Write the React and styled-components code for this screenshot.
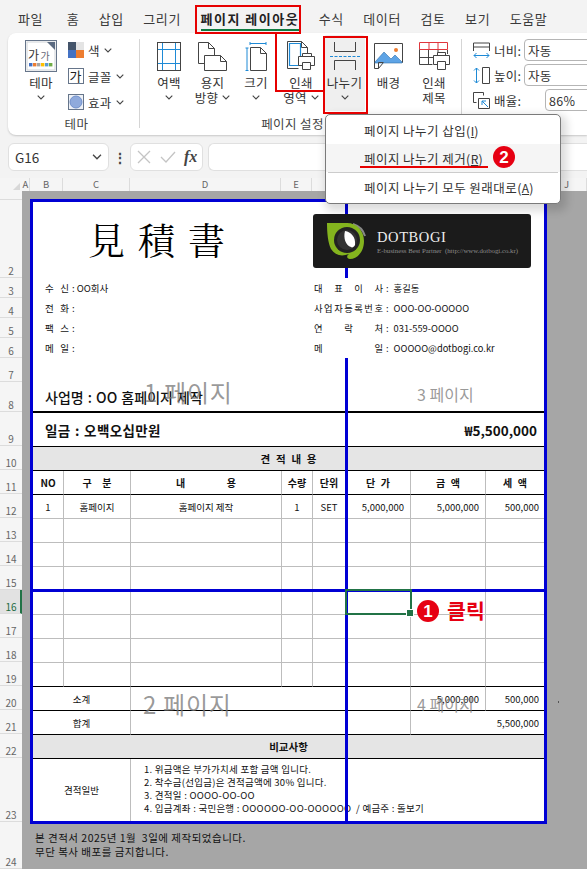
import React from "react";
import styled, { createGlobalStyle } from "styled-components";

const KR = `"Noto Sans CJK KR", "Noto Sans", sans-serif`;

const Global = createGlobalStyle`
  html, body { margin: 0; padding: 0; background: #f3f3f3; }
  body { font-family: ${KR}; color: #333; overflow: hidden; }
  * { box-sizing: border-box; }
`;

const Screen = styled.div`
  position: relative; width: 587px; height: 869px; overflow: hidden;
  display: flex; flex-direction: column; background: #f3f3f3;
`;

/* ---------- tabs ---------- */
const TabBar = styled.div`
  height: 33px; display: flex; align-items: center; gap: 19.5px; padding: 4px 0 0 18px;
  flex: none;
`;
const Tab = styled.div`
  position: relative; font-size: 13px; letter-spacing: ${p => (p.$active ? "1.5px" : "0.6px")}; white-space: nowrap;
  color: ${p => (p.$active ? "#222" : "#3a3a3a")};
  font-weight: ${p => (p.$active ? 700 : 400)};
  margin-right: ${p => p.$after || 0}px;
  ${p => p.$active && `
    &::after { content: ""; position: absolute; left: 0; right: 0; bottom: -3px; height: 2px; background: #107c41; }
  `}
`;

/* ---------- ribbon ---------- */
const Ribbon = styled.div`
  height: 102px; margin-left: 8px; flex: none; display: flex; background: #fff;
  border-radius: 8px 0 0 8px; box-shadow: 0 1px 2px rgba(0,0,0,.18);
`;
const Group = styled.div`
  width: ${p => p.$w}px; flex: none; display: flex; flex-direction: column; position: relative;
  padding-left: ${p => p.$pad || 0}px;
  ${p => p.$rule && `
    &::after { content: ""; position: absolute; right: 0; top: 6px; height: 89px; width: 1px; background: #d5d5d5; }
  `}
`;
const Tools = styled.div`
  height: 82px; flex: none; display: flex; padding-top: 5px;
`;
const GroupLabel = styled.div`
  flex: 1; display: flex; align-items: flex-start; justify-content: center;
  font-size: 12.5px; line-height: 17px; letter-spacing: .4px; color: #444; padding-right: ${p => p.$shift || 0}px;
  white-space: nowrap;
`;
const Big = styled.div`
  width: ${p => p.$w}px; flex: none; display: flex; flex-direction: column; align-items: center;
  font-size: 12.5px; line-height: 15px; letter-spacing: .3px; color: #333;
  ${p => p.$on && `background: #efefef; margin-top: -3px; padding-top: 3px; height: 76px; border-radius: 3px;`}
`;
const BigIcon = styled.div`
  height: 37px; display: flex; align-items: center; justify-content: center; padding-bottom: 1px;
`;
const Line = styled.div`
  height: 15px; display: flex; align-items: center; gap: 4px; white-space: nowrap;
`;
const SmallColumn = styled.div`
  display: flex; flex-direction: column; gap: 10px; padding-top: 4px; margin-left: 7px;
`;
const SmallRow = styled.div`
  display: flex; align-items: center; gap: 4px; height: 16px;
  font-size: 12.5px; letter-spacing: .3px; color: #333; white-space: nowrap;
`;
const ScaleColumn = styled.div`
  height: 82px; flex: none; display: flex; flex-direction: column; gap: 3px; margin-left: 11px; padding-top: 6px;
`;
const ScaleRow = styled.div`
  display: flex; align-items: center; height: 22px; font-size: 12.5px; letter-spacing: .3px; color: #333;
  width: 200px;
  & > svg { flex: none; }
`;
const ScaleName = styled.span`
  width: ${p => p.$w}px; flex: none; padding-left: 4px;
`;
const ScaleInput = styled.div`
  height: 22px; width: 80px; flex: none; border: 1px solid #b5b5b5; border-radius: 4px;
  padding-left: 3px; display: flex; align-items: center; background: #fff; color: #333;
`;
const Chevron = styled.svg`
  width: ${p => p.$large ? 10 : 8}px; height: ${p => p.$large ? 6 : 5}px; fill: none; stroke: #444; stroke-width: 1.1; flex: none;
`;
const Chev = ({ large }) => <Chevron $large={large} viewBox="0 0 8 5"><path d="M.7.7 4 4 7.3.7" /></Chevron>;

/* ---------- formula row ---------- */
const FormulaRow = styled.div`
  height: 43px; flex: none; display: flex; align-items: center; padding: 1px 0 0 8px;
`;
const NameBox = styled.div`
  width: 101px; height: 28px; flex: none; background: #fff; border: 1px solid #e0e0e0; border-radius: 6px;
  display: flex; align-items: center; justify-content: space-between; padding: 0 6px 0 6px;
  font-size: 13.5px; color: #333;
`;
const Dots = styled.div`
  width: 21px; flex: none; text-align: center; font-size: 14px; font-weight: 700; color: #444; line-height: 1;
`;
const FxBox = styled.div`
  width: 73px; height: 28px; flex: none; background: #fff; border: 1px solid #e0e0e0; border-radius: 6px;
  display: flex; align-items: center; gap: 9px; padding-left: 6px;
`;
const FxText = styled.span`
  font-family: "Liberation Serif", serif; font-style: italic; font-size: 16px; font-weight: 700; color: #444; margin-left: -1px;
`;
const FormulaInput = styled.div`
  flex: 1; height: 28px; margin-left: 5px; background: #fff; border: 1px solid #e0e0e0; border-right: none; border-radius: 6px 0 0 6px;
`;

/* ---------- column header ---------- */
const ColBar = styled.div`
  height: 13px; flex: none; display: flex; background: #f5f5f5;
`;
const ColCell = styled.div`
  width: ${p => p.$w}px; flex: none; border-right: 1px solid #dcdcdc;
  display: flex; align-items: center; justify-content: center; font-size: 9.5px; color: #666; line-height: 1;
`;
const Corner = styled.div`
  width: 22px; flex: none; position: relative; background: #f5f5f5;
  &::after { content: ""; position: absolute; right: 2px; bottom: 1px; width: 0; height: 0;
    border-left: 7px solid transparent; border-bottom: 7px solid #d8d8d8; }
`;

/* ---------- body ---------- */
const Body = styled.div`
  flex: 1; display: flex; min-height: 0;
`;
const RowBar = styled.div`
  width: 22px; flex: none; background: #f5f5f5; display: flex; flex-direction: column;
`;
const RowCell = styled.div`
  height: ${p => p.$h}px; flex: none; display: flex; align-items: flex-end; justify-content: center; padding-bottom: 1px;
  font-size: 10px; line-height: 11px; color: #666; border-bottom: 1px solid #dcdcdc;
  ${p => p.$on && `background: #e2e2e2; color: #1d6b42; border-right: 2px solid #217346; padding-left: 2px;`}
`;
const Canvas = styled.div`
  flex: 1; position: relative; background: #a6a6a6; padding: 8px 0 0 8px;
`;
const Frame = styled.div`
  width: 517px; height: 625px; border: 3px solid #0000d4; background: #fff; position: relative;
`;
const Sheet = styled.div`
  display: grid; color: #111;
  grid-template-columns: 31px 67px 151px 31px 33px 65px 75px 58px;
  grid-template-rows: 76px repeat(4, 20px) 24px 31px 34px repeat(13, 24px) 62px;
`;
const Cell = styled.div`
  grid-column: span ${p => p.$span || 1};
  display: flex; align-items: center; min-width: 0; white-space: pre;
  justify-content: ${p => p.$align || "center"};
  font-size: ${p => p.$size || 9.5}px;
  font-weight: ${p => (p.$bold ? 700 : 400)};
  padding: ${p => p.$pad || "0"};
  background: ${p => p.$bg || "transparent"};
  border-right: ${p => (p.$side ? "1px solid #bdbdbd" : "none")};
  border-bottom: ${p => (p.$under === "heavy" ? "2px solid #000" : p.$under === "black" ? "1px solid #000" : p.$under === "gray" ? "1px solid #bdbdbd" : "none")};
`;
const InfoCell = styled(Cell)`
  position: relative; z-index: 2; background: #fff;
`;
const ProjectCell = styled(Cell)`
  font-weight: 500; word-spacing: 1px;
`;
const AmountCell = styled(Cell)`
  letter-spacing: .35px; word-spacing: 1px;
`;
const Colon = styled.span`
  margin: 0 ${p => p.$gap || 3}px 0 3px;
`;
const Spread = styled.span`
  display: inline-flex; justify-content: space-between; width: ${p => p.$w}px; flex: none;
`;
const Spaced = ({ w, text }) => (
  <Spread $w={w}>{[...text].map((c, i) => <span key={i}>{c}</span>)}</Spread>
);
const Title = styled(Cell)`
  font-family: "Liberation Serif", "Noto Serif CJK KR", serif;
  font-size: 37px; line-height: 1; justify-content: flex-start; padding: 4px 0 0 55px; letter-spacing: 13px; color: #000;
`;
const LogoCell = styled(Cell)`
  align-items: flex-start; justify-content: flex-start; padding-top: 12px; position: relative; z-index: 2;
`;
const Logo = styled.div`
  width: 218px; height: 54px; background: #1b1b1b; border-radius: 3px; display: flex; align-items: center; padding-left: 14px; position: relative;
`;
const LogoText = styled.div`
  margin-left: 11px; display: flex; flex-direction: column; color: #eee; margin-top: 3px;
`;
const LogoName = styled.div`
  font-family: "Liberation Serif", serif; font-size: 14.5px; line-height: 13px; letter-spacing: .6px; font-variant: small-caps;
`;
const LogoSub = styled.div`
  font-family: "Liberation Serif", serif; font-size: 6.8px; line-height: 9px; color: #8c8c8c; margin-top: 2px; white-space: pre;
`;
const Notes = styled.div`
  font-size: 10.5px; line-height: 14px; color: #111; padding: 7px 0 0 5px; letter-spacing: .5px; white-space: pre;
`;
const TermList = styled.div`
  line-height: 13px; font-size: 9.5px; letter-spacing: .25px; padding-bottom: 2px;
`;

/* ---------- overlays ---------- */
const BlueV = styled.div`
  position: absolute; left: 312px; top: -3px; bottom: -3px; width: 3px; background: #0000d4; z-index: 1;
`;
const BlueH = styled.div`
  position: absolute; left: 0; right: 0; top: 387px; height: 3px; background: #0000d4; z-index: 1;
`;
const Selection = styled.div`
  position: absolute; left: 312px; top: 387px; width: 67px; height: 26px; border: 2px solid #217346; z-index: 2;
  &::after { content: ""; position: absolute; right: -4px; bottom: -4px; width: 6px; height: 6px; background: #217346; border: 1px solid #fff; }
`;
const Watermark = styled.div`
  position: absolute; left: ${p => p.$x}px; top: ${p => p.$y}px; font-size: ${p => p.$size}px; line-height: 1;
  letter-spacing: ${p => p.$track || 0}px;
  color: rgba(120,120,120,.75); z-index: 3; white-space: nowrap;
`;
const Badge = styled.div`
  position: absolute; left: ${p => p.$x}px; top: ${p => p.$y}px; width: 22px; height: 22px; border-radius: 50%;
  background: #e60012; color: #fff; font-size: 17px; font-weight: 700; display: flex; align-items: center; justify-content: center;
  z-index: 6; font-family: "Liberation Sans", sans-serif; line-height: 1;
`;
const ClickLabel = styled.div`
  position: absolute; left: 447px; top: 597px; font-size: 20.5px; font-weight: 700; color: #e60012; line-height: 26px; z-index: 6; letter-spacing: .2px;
`;
const RedBox = styled.div`
  position: absolute; left: ${p => p.$x}px; top: ${p => p.$y}px; width: ${p => p.$w}px; height: ${p => p.$h}px;
  border: solid #e60000; border-width: ${p => p.$edges || "2px"}; z-index: 5; pointer-events: none;
`;
const Speck = styled.div`
  position: absolute; left: 558px; top: 701px; width: 1px; height: 2px; background: #555;
`;
const Menu = styled.div`
  position: absolute; left: 325px; top: 114px; width: 236px; height: 90px; background: #fff; z-index: 4;
  border: 1px solid #7a7a7a; border-radius: 5px; box-shadow: 3px 4px 8px 3px rgba(0,0,0,.14);
  display: flex; flex-direction: column; padding-top: 1px;
`;
const MenuItem = styled.div`
  height: ${p => p.$h}px; display: flex; align-items: center; padding-left: 38px; font-size: 12.5px; letter-spacing: .45px; color: #333;
  background: ${p => (p.$hover ? "#f5f5f5" : "transparent")}; white-space: pre; flex: none; position: relative;
  ${p => p.$mark && `&::after { content: ""; position: absolute; left: 34px; top: 22px; width: 128px; height: 2px; background: #e60000; }`}
`;
const MenuRule = styled.div`
  height: 1px; margin: 0 2px; background: #ccc; flex: none;
`;
const Key = styled.span`
  text-decoration: underline; text-underline-offset: 1px; font-size: 12px; letter-spacing: 0;
`;

/* ---------- icons ---------- */
const D = "#444"; const B = "#1e8ad6";
const ThemeIcon = () => (
  <svg width="32" height="33" viewBox="0 0 32 33">
    <rect x=".5" y=".5" width="31" height="31" fill="#fff" stroke="#66758a" />
    <rect x="2" y="2" width="28" height="28" fill="#fff" stroke="#cfd3d8" />
    <path d="M22 2h8v8z" fill="#5a6a80" />
    <text x="3" y="20" fontSize="12" fill="#333" fontFamily={KR}>가</text>
    <text x="15.5" y="20" fontSize="10" fill="#667" fontFamily={KR}>가</text>
    {["#4472c4", "#ed7d31", "#a5a5a5", "#ffc000", "#5b9bd5", "#70ad47"].map((c, i) => (
      <rect key={c} x={4 + i * 4} y="23" width="3.4" height="3.4" fill={c} />
    ))}
  </svg>
);
const ColorIcon = () => (
  <svg width="16" height="16" viewBox="0 0 16 16">
    <rect width="8" height="8" fill="#44546a" /><rect x="8" width="8" height="8" fill="#e4e4e4" />
    <rect y="8" width="8" height="8" fill="#4472c4" /><rect x="8" y="8" width="8" height="8" fill="#ed7d31" />
  </svg>
);
const FontIcon = () => (
  <svg width="16" height="16" viewBox="0 0 16 16">
    <rect x=".5" y=".5" width="15" height="15" fill="#fff" stroke="#66758a" />
    <text x="1.500" y="13" fontSize="13" fill="#222" fontFamily={KR}>가</text>
  </svg>
);
const EffectIcon = () => (
  <svg width="16" height="16" viewBox="0 0 16 16">
    <rect x=".5" y=".5" width="15" height="15" fill="#eef1f6" stroke="#66758a" />
    <circle cx="8" cy="8" r="6" fill="#8faadc" stroke="#6f8fca" />
  </svg>
);
const MarginIcon = () => (
  <svg width="24" height="29" viewBox="0 0 24 29" fill="none">
    <path d="M5.500 1v27M18.500 1v27M1 7.500h22M1 21.500h22" stroke={B} />
    <rect x=".5" y=".5" width="23" height="28" stroke={D} />
  </svg>
);
const OrientIcon = () => (
  <svg width="29" height="29" viewBox="0 0 29 29" fill="none" stroke={D}>
    <path d="M.5 .5h10l6 6v13M.5 .5v21h6" />
    <path d="M10.500 .5v6h6" />
    <path d="M6.500 13.500h16l6 6v9h-22z" fill="#fff" />
    <path d="M22.500 13.500v6h6" />
  </svg>
);
const SizeIcon = () => (
  <svg width="22" height="29" viewBox="0 0 22 29" fill="none">
    <path d="M5 1.500h16M5 0v3M21 0v3M.5 6h3M2 6v23M.5 28.500h3" stroke={B} />
    <path d="M5.500 5.500h10l6 6v17h-16z" stroke={D} /><path d="M15.500 5.500v6h6" stroke={D} />
  </svg>
);
const PrintAreaIcon = () => (
  <svg width="28" height="30" viewBox="0 0 28 30" fill="none">
    <path d="M.5 .5h14l6 6v8M.5 .5v27h11" stroke={D} /><path d="M14.500 .5v6h6" stroke={D} />
    <path d="M2.500 2.500h11v22h-11z" stroke={B} strokeWidth="1.2" />
    <path d="M15.500 15.500v-3h9v3M11.500 15.500h16v9h-16z" stroke={D} fill="#fff" />
    <path d="M15.500 21.500h8v7h-8z" stroke={D} fill="#fff" />
  </svg>
);
const BreakIcon = () => (
  <svg width="30" height="28" viewBox="0 0 30 28" fill="none">
    <path d="M4.500 0v9.500h21V0" stroke={D} />
    <path d="M0 14.500h30" stroke={B} strokeDasharray="3 1.500" />
    <path d="M4.500 28V18.500h21V28" stroke={D} />
  </svg>
);
const BackgroundIcon = () => (
  <svg width="29" height="27" viewBox="0 0 29 27" fill="none">
    <path d="M.5 .5h28v19h-19l-5 6h-4z" fill="#fff" stroke={D} />
    <path d="M1 19l9-10 7 7 4-4 7 7v1H1z" fill="#5ea4e6" stroke="#2f6ea8" strokeWidth=".6" />
    <circle cx="22" cy="7" r="2" fill="#ed7d31" />
    <path d="M4.500 25.500v-6h5" stroke={D} />
  </svg>
);
const TitleIcon = () => (
  <svg width="31" height="28" viewBox="0 0 31 28" fill="none">
    <path d="M.5 .5h28v7h-28zM10 .5v7M19 .5v7" stroke="#e0363c" />
    <path d="M.5 7.500v15h13M.5 15.500h14M9.500 8v14M19 8v5M28.500 8v4" stroke={D} />
    <path d="M18.500 13.500v-3h8v3M14.500 13.500h16v9h-16z" stroke={D} fill="#fff" />
    <path d="M18.500 19.500h8v8h-8z" stroke={D} fill="#fff" />
  </svg>
);
const WidthIcon = () => (
  <svg width="17" height="17" viewBox="0 0 17 17" fill="none">
    <path d="M.5 9v-8h16v8M.5 5h16" stroke={D} />
    <path d="M1 13.500h15M3.500 11l-2.500 2.500 2.500 2.500M13.500 11l2.500 2.500-2.500 2.500" stroke={B} />
  </svg>
);
const HeightIcon = () => (
  <svg width="17" height="17" viewBox="0 0 17 17" fill="none">
    <path d="M9.500 .5h7v16h-7z" stroke={D} />
    <path d="M3.500 1v15M1 3.500L3.500 1 6 3.500M1 13.500L3.500 16 6 13.500" stroke={B} />
  </svg>
);
const ScaleIcon = () => (
  <svg width="17" height="17" viewBox="0 0 17 17" fill="none">
    <path d="M.5 .5h10v3M.5 .5v10h3" stroke={D} />
    <path d="M5.500 6.500h11v10h-11z" stroke={D} />
    <path d="M15 15l-6-6M9 13V9h4" stroke={B} />
  </svg>
);
const XIcon = () => (
  <svg width="14" height="14" viewBox="0 0 14 14" fill="none" stroke="#c4c4c4" strokeWidth="1.3">
    <path d="M1 1l12 12M13 1L1 13" />
  </svg>
);
const CheckIcon = () => (
  <svg width="16" height="12" viewBox="0 0 16 12" fill="none" stroke="#c4c4c4" strokeWidth="1.3">
    <path d="M1 6l5 5L15 1" />
  </svg>
);
const LeafMark = () => (
  <svg width="39" height="37" viewBox="0 0 39 37" style={{ flex: "none" }}>
    <path d="M26 1a18 18 0 0 1 12 12" fill="none" stroke="#888" strokeWidth="2" />
    <path d="M0 0h20c10 0 17 8 17 18 0 11-7 18-14 18-3 0-4-3-1-5-8 3-14 1-18-5C1 20 0 10 0 0z" fill="#84b41e" />
    <circle cx="20" cy="17" r="13" fill="#222" />
    <circle cx="20" cy="17" r="10" fill="#333" />
    <path d="M18 8c6 1 11 6 10 14-1 2-3 3-4 2-5-1-8-9-6-16z" fill="#fff" />
  </svg>
);

/* ---------- data ---------- */
const tabs = ["파일", "홈", "삽입", "그리기", "페이지 레이아웃", "수식", "데이터", "검토", "보기", "도움말"];
const cols = [["A", 8], ["B", 33], ["C", 67], ["D", 151], ["E", 31], ["F", 34], ["G", 64], ["H", 75], ["I", 62], ["J", 40]];
const rowHeights = [9, 78, 20, 20, 20, 20, 24, 30, 34, 24, 24, 24, 24, 24, 24, 24, 24, 24, 24, 24, 24, 24, 64, 47];
const leftInfo = [["수신", "OO회사"], ["전화", ""], ["팩스", ""], ["메일", ""]];
const rightInfo = [
  ["대표이사", "홍길동"], ["사업자등록번호", "OOO-OO-OOOOO"],
  ["연락처", "031-559-OOOO"], ["메일", "OOOOO@dotbogi.co.kr"],
];
const heads = [
  ["NO"], [null, "구분", 29], [null, "내용", 60], ["수량"], ["단위"], [null, "단가", 24], [null, "금액", 24], [null, "세액", 24],
];
const item = [
  ["1"], ["홈페이지"], ["홈페이지 제작"], ["1"], ["SET"],
  ["5,000,000", "flex-end", "0 6px 0 0"], ["5,000,000", "flex-end", "0 6px 0 0"], ["500,000", "flex-end", "0 5px 0 0"],
];

export default function App() {
  return (
    <Screen>
      <Global />
      <TabBar>
        {tabs.map((t, i) => <Tab key={t} $active={i === 4} $after={i === 0 ? 4 : 0}>{t}</Tab>)}
      </TabBar>

      <Ribbon>
        <Group $w={132} $pad={13} $rule>
          <Tools>
            <Big $w={40}>
              <BigIcon><ThemeIcon /></BigIcon>
              <Line>테마</Line>
              <Line><Chev /></Line>
            </Big>
            <SmallColumn>
              <SmallRow><ColorIcon />색 <Chev /></SmallRow>
              <SmallRow><FontIcon />글꼴 <Chev /></SmallRow>
              <SmallRow><EffectIcon />효과 <Chev /></SmallRow>
            </SmallColumn>
          </Tools>
          <GroupLabel $shift={8}>테마</GroupLabel>
        </Group>

        <Group $w={322} $pad={7} $rule>
          <Tools>
            <Big $w={44}><BigIcon><MarginIcon /></BigIcon><Line>여백</Line><Line><Chev /></Line></Big>
            <Big $w={43}><BigIcon><OrientIcon /></BigIcon><Line>용지</Line><Line>방향 <Chev /></Line></Big>
            <Big $w={44}><BigIcon><SizeIcon /></BigIcon><Line>크기</Line><Line><Chev /></Line></Big>
            <Big $w={46}><BigIcon><PrintAreaIcon /></BigIcon><Line>인쇄</Line><Line>영역 <Chev /></Line></Big>
            <Big $w={41} $on><BigIcon><BreakIcon /></BigIcon><Line>나누기</Line><Line><Chev /></Line></Big>
            <Big $w={47}><BigIcon><BackgroundIcon /></BigIcon><Line>배경</Line></Big>
            <Big $w={44}><BigIcon><TitleIcon /></BigIcon><Line>인쇄</Line><Line>제목</Line></Big>
          </Tools>
          <GroupLabel $shift={24}>페이지 설정</GroupLabel>
        </Group>

        <Group $w={125}>
          <ScaleColumn>
            <ScaleRow><WidthIcon /><ScaleName $w={34}>너비:</ScaleName><ScaleInput>자동</ScaleInput></ScaleRow>
            <ScaleRow><HeightIcon /><ScaleName $w={34}>높이:</ScaleName><ScaleInput>자동</ScaleInput></ScaleRow>
            <ScaleRow><ScaleIcon /><ScaleName $w={55}>배율:</ScaleName><ScaleInput>86%</ScaleInput></ScaleRow>
          </ScaleColumn>
          <GroupLabel $shift={18}>크기 조정에 맞춤</GroupLabel>
        </Group>
      </Ribbon>

      <FormulaRow>
        <NameBox>G16 <Chev large /></NameBox>
        <Dots>⋮</Dots>
        <FxBox><XIcon /><CheckIcon /><FxText>fx</FxText></FxBox>
        <FormulaInput />
      </FormulaRow>

      <ColBar>
        <Corner />
        {cols.map(([n, w]) => <ColCell key={n} $w={w}>{n}</ColCell>)}
      </ColBar>

      <Body>
        <RowBar>
          {rowHeights.map((h, i) => (
            <RowCell key={i} $h={h} $on={i === 15}>{i === 0 ? "" : i + 1}</RowCell>
          ))}
        </RowBar>
        <Canvas>
          <Frame>
            <Sheet>
              <Title $span={4}>見積書</Title>
              <LogoCell $span={4}>
                <Logo>
                  <LeafMark />
                  <LogoText>
                    <LogoName>DOTBOGI</LogoName>
                    <LogoSub>E-business Best Partner  (http://www.dotbogi.co.kr)</LogoSub>
                  </LogoText>
                </Logo>
              </LogoCell>

              {leftInfo.map(([k, v], i) => (
                <React.Fragment key={k}>
                  <Cell $span={4} $align="flex-start" $pad="0 0 0 12px" $size={9.5}>
                    <Spaced w={24} text={k} /><Colon $gap={2}>:</Colon>{v}
                  </Cell>
                  <InfoCell $span={4} $align="flex-start" $pad="0 0 0 1px" $size={9.3}>
                    <Spaced w={69} text={rightInfo[i][0]} /><Colon $gap={5}>:</Colon>{rightInfo[i][1]}
                  </InfoCell>
                </React.Fragment>
              ))}

              <Cell $span={8} />
              <ProjectCell $span={8} $align="flex-start" $pad="0 0 0 12px" $size={14} $under="heavy">사업명 : OO 홈페이지 제작</ProjectCell>
              <AmountCell $span={5} $align="flex-start" $pad="0 0 0 12px" $size={13.5} $bold $under="black">일금 : 오백오십만원</AmountCell>
              <Cell $span={3} $align="flex-end" $pad="0 7px 0 0" $size={13.5} $bold $under="black">₩5,500,000</Cell>
              <Cell $span={8} $bg="#e5e5e5" $under="black" $size={10.5} $bold><Spaced w={56} text="견적내용" /></Cell>

              {heads.map(([t, s, w], i) => (
                <Cell key={i} $side={i < 7} $under="black" $size={10} $bold>
                  {s ? <Spaced w={w} text={s} /> : t}
                </Cell>
              ))}
              {item.map(([t, a, p], i) => (
                <Cell key={i} $side={i < 7} $under="gray" $align={a} $pad={p} $size={9.5}>{t}</Cell>
              ))}
              {Array.from({ length: 7 }).flatMap((_, r) =>
                Array.from({ length: 8 }).map((_, c) => (
                  <Cell key={`${r}-${c}`} $side={c < 7} $under={r === 6 ? "black" : "gray"} />
                ))
              )}

              <Cell $span={2} $side $under="black">소계</Cell>
              <Cell $span={4} $side $under="black" />
              <Cell $side $under="black" $align="flex-end" $pad="0 6px 0 0">5,000,000</Cell>
              <Cell $under="black" $align="flex-end" $pad="0 5px 0 0">500,000</Cell>

              <Cell $span={2} $side $under="black">합계</Cell>
              <Cell $span={4} $side $under="black" />
              <Cell $span={2} $under="black" $align="flex-end" $pad="0 5px 0 0">5,500,000</Cell>

              <Cell $span={8} $bg="#e5e5e5" $under="black" $size={10.5} $bold>비교사항</Cell>

              <Cell $span={2} $side>견적일반</Cell>
              <Cell $span={6} $align="flex-start" $pad="0 0 0 13px">
                <TermList>
                  <div>1. 위금액은 부가가치세 포함 금액 입니다.</div>
                  <div>2. 착수금(선입금)은 견적금액에 30% 입니다.</div>
                  <div>3. 견적일 : OOOO-OO-OO</div>
                  <div>4. 입금계좌 : 국민은행 : OOOOOO-OO-OOOOOO  / 예금주 : 돌보기</div>
                </TermList>
              </Cell>
            </Sheet>
            <BlueV />
            <BlueH />
            <Selection />
            <Watermark $x={111} $y={178} $size={24} $track={.7}>1 페이지</Watermark>
            <Watermark $x={110} $y={490} $size={24} $track={.7}>2 페이지</Watermark>
            <Watermark $x={384} $y={184} $size={16}>3 페이지</Watermark>
            <Watermark $x={384} $y={494} $size={16}>4 페이지</Watermark>
          </Frame>
          <Notes>{"본 견적서 2025년 1월  3일에 제작되었습니다.\n무단 복사 배포를 금지합니다."}</Notes>
        </Canvas>
      </Body>

      <Menu>
        <MenuItem $h={28}>페이지 나누기 삽입(<Key>I</Key>)</MenuItem>
        <MenuItem $h={28} $hover $mark>페이지 나누기 제거(<Key>R</Key>)</MenuItem>
        <MenuRule />
        <MenuItem $h={29}>페이지 나누기 모두 원래대로(<Key>A</Key>)</MenuItem>
      </Menu>

      <RedBox $x={195} $y={5} $w={106} $h={29} />
      <RedBox $x={275} $y={34} $w={50} $h={58} $edges="0 0 2px 2px" />
      <RedBox $x={323} $y={36} $w={45} $h={78} />
      <Badge $x={493} $y={146}>2</Badge>
      <Badge $x={417} $y={600}>1</Badge>
      <ClickLabel>클릭</ClickLabel>
      <Speck />
    </Screen>
  );
}
